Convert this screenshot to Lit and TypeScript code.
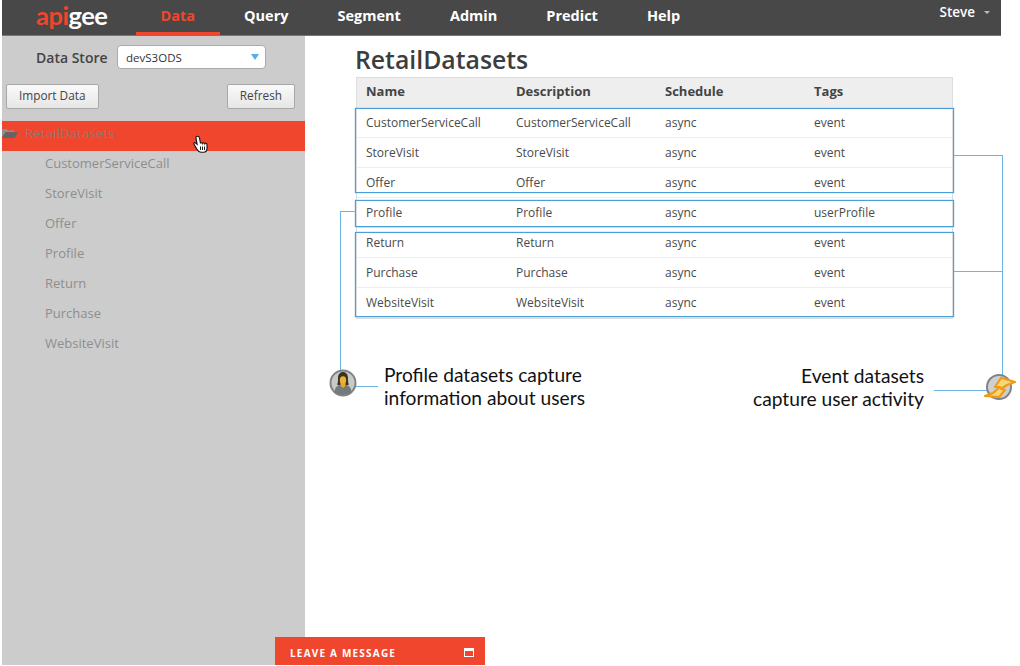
import { LitElement, html, css, svg } from "lit";
import { customElement } from "lit/decorators.js";

const NAV = ["Data", "Query", "Segment", "Admin", "Predict", "Help"];
const TREE = ["CustomerServiceCall", "StoreVisit", "Offer", "Profile", "Return", "Purchase", "WebsiteVisit"];
const ROWS = TREE.map((name) => [name, name, "async", name === "Profile" ? "userProfile" : "event"]);

const folderIcon = svg`<svg class="folder" width="16" height="10" viewBox="0 0 16 10">
  <path d="M0 1h5l1 1.5h6V4H3.5L0 9z" fill="#8b8f90"/>
  <path d="M3.6 4.2H16L12.8 10H0z" fill="#5d666a"/>
</svg>`;

const handCursor = svg`<svg class="hand" width="16" height="20" viewBox="0 0 16 20">
  <path d="M4.2 1.2c-1 0-1.4.8-1.2 1.7l1.1 6.4-1.7-1.4c-.9-.7-2.1.3-1.4 1.4l3 5.1c.8 1.400 2 2.800 4 2.800h2.500c2.400 0 3.500-1.700 3.500-4v-3.600c0-1.500-1.700-1.700-2.100-.8-.2-1.200-1.900-1.300-2.200-.3-.4-1-2-1-2.200 0L6.500 3c-.2-1.100-1.200-1.800-2.300-1.800z" fill="#fff" stroke="#111" stroke-width="1.100"/>
  <path d="M7.500 11.500v3.500M9.500 11.500v3.500M11.500 11.500v3.500" stroke="#222" stroke-width="1"/>
</svg>`;

const personIcon = svg`<svg class="avatar" width="28" height="30" viewBox="0 0 28 30">
  <circle cx="14" cy="16" r="12.500" fill="#c9c9c9" stroke="#7f8486" stroke-width="2"/>
  <path d="M5.500 25c.5-5 3-6.500 6-7h5c3 .5 5.500 2 6 7-2.300 2-5.200 3-8.500 3s-6.200-1-8.500-3z" fill="#74797b"/>
  <path d="M11.500 16h5v3l-2.500 2-2.500-2z" fill="#e9a52c"/>
  <path d="M8 17.500c1-1.500 1-3.500 1-6.500 0-3.500 2-6 5-6s5 2.500 5 6c0 3 0 5 1 6.500-1.500.8-3 .8-3.500.5v-5h-5v5c-.5.3-2 .3-3.500-.5z" fill="#3a3427"/>
  <ellipse cx="14" cy="13" rx="3.200" ry="3.800" fill="#eeb02f"/>
</svg>`;

const boltIcon = svg`<svg class="bolt" width="32" height="28" viewBox="0 0 32 28">
  <circle cx="15" cy="14" r="12" fill="#cfcfcf" stroke="#808486" stroke-width="2"/>
  <path d="M17 5 11 14 16 14 9 20 1 23 15 24 21 17 17 16 23 12 31 9 21 6z" fill="#f8d67c" stroke="#f29a10" stroke-width="2.200" stroke-linejoin="round"/>
</svg>`;

@customElement("app-root")
export class AppRoot extends LitElement {
  static styles = css`
    :host {
      display: block;
      position: relative;
      width: 1020px;
      height: 666px;
      overflow: hidden;
      background: #fff;
      font-family: "Open Sans", "Liberation Sans", sans-serif;
      color: #444;
    }

    .shell {
      display: flex;
      flex-direction: column;
      height: 665px;
      margin-left: 2px;
    }

    .topbar {
      display: flex;
      width: 999px;
      height: 36px;
      box-sizing: border-box;
      background: #484848;
      border-bottom: 1px solid #777;
      color: #fff;
      flex: none;
    }

    .logo {
      width: 134px;
      box-sizing: border-box;
      padding-left: 34px;
      font-family: "Lato", sans-serif;
      font-size: 25.5px;
      font-weight: 700;
      line-height: 30px;
      letter-spacing: -0.5px;
    }

    .logo span {
      color: #f0462d;
    }

    .nav {
      display: flex;
    }

    .nav a {
      padding: 0 24.5px;
      height: 35px;
      box-sizing: border-box;
      font-size: 14.5px;
      font-weight: 700;
      line-height: 32px;
    }

    .nav a.active {
      color: #f0462d;
      border-bottom: 3px solid #f0462d;
    }

    .user {
      margin-left: auto;
      display: flex;
      align-items: flex-start;
      gap: 9px;
      padding-right: 11px;
      font-size: 13.5px;
      font-weight: 600;
      line-height: 24px;
    }

    .user i {
      width: 0;
      height: 0;
      margin-top: 11px;
      border: 3px solid transparent;
      border-top: 3px solid #bbb;
      border-bottom: 0;
    }

    .body {
      display: flex;
      flex: 1;
      min-height: 0;
    }

    .sidebar {
      width: 303px;
      background: #ccc;
      flex: none;
    }

    .store {
      display: flex;
      align-items: center;
      gap: 9px;
      padding: 9px 0 0 34px;
      font-size: 14px;
      font-weight: 600;
      color: #444;
    }

    .select {
      display: flex;
      align-items: center;
      justify-content: space-between;
      width: 149px;
      height: 24px;
      box-sizing: border-box;
      padding: 0 6px 0 8.5px;
      background: #fff;
      border: 1px solid #aaa;
      border-radius: 4px;
      font-size: 11.5px;
      font-weight: 400;
      color: #333;
    }

    .select i {
      width: 0;
      height: 0;
      border: 4px solid transparent;
      border-top: 6px solid #52ade8;
      border-bottom: 0;
    }

    .actions {
      display: flex;
      justify-content: space-between;
      padding: 15px 10px 0 4px;
    }

    .btn {
      height: 25px;
      box-sizing: border-box;
      padding: 0 12px;
      background: linear-gradient(#fafafa, #e6e6e6);
      border: 1px solid #a8a8a8;
      border-radius: 2px;
      font-size: 11.8px;
      line-height: 21px;
      color: #444;
    }

    .tree-root {
      display: flex;
      align-items: center;
      height: 30px;
      box-sizing: border-box;
      padding-bottom: 7px;
      margin-top: 12px;
      background: #f0462d;
      font-size: 13.5px;
      color: #8f7a6e;
      position: relative;
    }

    .folder {
      margin-right: 7px;
    }

    .hand {
      position: absolute;
      left: 191px;
      top: 14px;
    }

    .tree-list {
      margin-top: -3px;
    }

    .tree-item {
      height: 30px;
      padding-left: 43px;
      font-size: 13px;
      line-height: 30px;
      color: #8e8e8e;
    }

    .main {
      flex: 1;
      padding-left: 51px;
    }

    h1 {
      margin: 0 0 0 -1px;
      height: 41px;
      font-size: 24.8px;
      font-weight: 600;
      line-height: 46px;
      color: #3d3d3d;
    }

    .table {
      width: 597px;
      box-sizing: border-box;
      border: 1px solid #ddd;
      font-size: 12px;
      color: #4a4a4a;
    }

    .row {
      display: grid;
      grid-template-columns: 150px 149px 149px 140px;
      height: 30px;
      box-sizing: border-box;
      padding-left: 9px;
      line-height: 29px;
      border-bottom: 1px solid #eee;
    }

    .row.head {
      background: #eee;
      font-size: 13px;
      font-weight: 700;
      line-height: 27px;
      border-bottom: 0;
      color: #444;
    }

    .frame {
      position: absolute;
      left: 355px;
      width: 599px;
      box-sizing: border-box;
      border: 1px solid #4a9fd8;
      box-shadow: 0 0 1px #4a9fd8;
      pointer-events: none;
    }

    .wire {
      position: absolute;
      background: #6db5e2;
    }

    .note {
      position: absolute;
      font-family: "Lato", sans-serif;
      font-size: 19.2px;
      line-height: 23px;
      color: #111;
      white-space: nowrap;
    }

    .note.right {
      text-align: right;
    }

    .avatar {
      position: absolute;
      left: 329px;
      top: 367px;
    }

    .bolt {
      position: absolute;
      left: 984px;
      top: 373px;
    }

    .chat {
      position: absolute;
      left: 275px;
      top: 637px;
      display: flex;
      align-items: center;
      justify-content: space-between;
      width: 210px;
      height: 28px;
      box-sizing: border-box;
      padding: 3px 11px 0 15px;
      background: #f0462d;
      color: #fff;
      font-size: 10px;
      font-weight: 700;
      letter-spacing: 1.2px;
    }

    .chat i {
      width: 10px;
      height: 9px;
      box-sizing: border-box;
      border: 1px solid #fff;
      border-top-width: 3px;
    }
  `;

  render() {
    return html`
      <div class="shell">
        <header class="topbar">
          <div class="logo"><span>api</span>gee</div>
          <nav class="nav">
            ${NAV.map((item, i) => html`<a class=${i === 0 ? "active" : ""}>${item}</a>`)}
          </nav>
          <div class="user">Steve <i></i></div>
        </header>
        <div class="body">
          <aside class="sidebar">
            <div class="store">
              Data Store
              <div class="select">devS3ODS <i></i></div>
            </div>
            <div class="actions">
              <div class="btn">Import Data</div>
              <div class="btn">Refresh</div>
            </div>
            <div class="tree-root">${folderIcon}RetailDatasets${handCursor}</div>
            <div class="tree-list">
              ${TREE.map((item) => html`<div class="tree-item">${item}</div>`)}
            </div>
          </aside>
          <main class="main">
            <h1>RetailDatasets</h1>
            <div class="table">
              <div class="row head">
                <span>Name</span><span>Description</span><span>Schedule</span><span>Tags</span>
              </div>
              ${ROWS.map(
                (row) => html`<div class="row">${row.map((cell) => html`<span>${cell}</span>`)}</div>`
              )}
            </div>
          </main>
        </div>
      </div>

      <div class="frame" style="top:108px;height:85px"></div>
      <div class="frame" style="top:200px;height:27px"></div>
      <div class="frame" style="top:232px;height:85px"></div>

      <div class="wire" style="left:340px;top:211px;width:16px;height:1px"></div>
      <div class="wire" style="left:340px;top:211px;width:1px;height:160px"></div>
      <div class="wire" style="left:356px;top:386px;width:22px;height:1px"></div>
      <div class="wire" style="left:954px;top:155px;width:48px;height:1px"></div>
      <div class="wire" style="left:954px;top:271px;width:48px;height:1px"></div>
      <div class="wire" style="left:1002px;top:155px;width:1px;height:222px"></div>
      <div class="wire" style="left:934px;top:390px;width:56px;height:1px"></div>

      ${personIcon}
      ${boltIcon}
      <div class="note" style="left:384px;top:363px">Profile datasets capture<br />information about users</div>
      <div class="note right" style="right:96px;top:364px">Event datasets<br />capture user activity</div>

      <div class="chat">LEAVE A MESSAGE <i></i></div>
    `;
  }
}
